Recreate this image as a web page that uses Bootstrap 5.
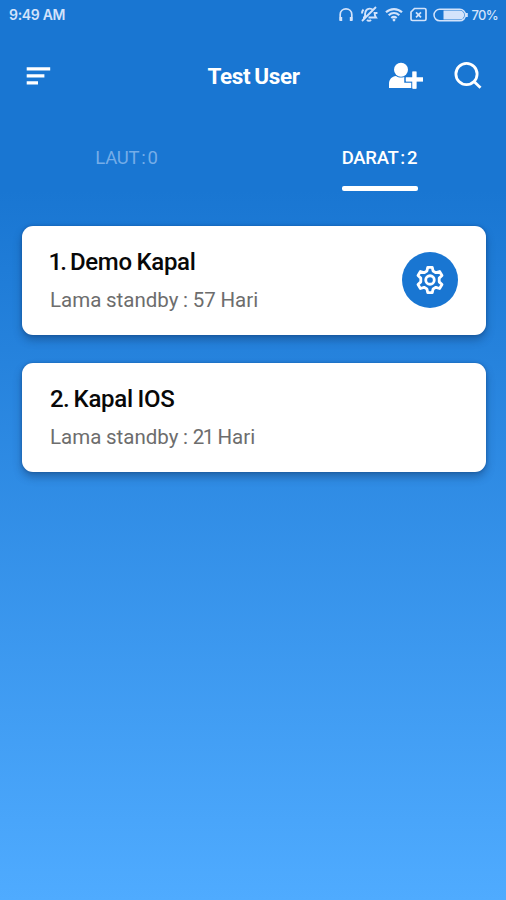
<!DOCTYPE html>
<html lang="id">
<head>
<meta charset="utf-8">
<meta name="viewport" content="width=device-width, initial-scale=1">
<title>Test User</title>
<link href="https://cdn.jsdelivr.net/npm/bootstrap@5.3.0/dist/css/bootstrap.min.css" rel="stylesheet">
<style>
body{font-family:Roboto,"Open Sans",sans-serif;background:linear-gradient(#1976d2 0,#1976d2 190px,#4fabff 900px);min-height:900px;line-height:1}
svg{display:block;flex:none}
.status-bar{height:30px;padding:0 8px 0 9px;color:#d3e3fb;font:500 14px/1 Inter,sans-serif}
.status-bar .clock{font-weight:600;letter-spacing:-.3px}
.status-bar .level{font-size:13px;letter-spacing:-.7px;margin-left:3px}
.app-bar{height:92px;display:grid;grid-template-columns:1fr auto 1fr;padding:0 22px 0 23px}
.app-bar .menu-icon{margin-left:3px}
.app-title{font-size:22.5px;font-weight:700;letter-spacing:-.4px;word-spacing:-1px;padding-top:1px}
.app-actions{gap:26px}
.tab-row{height:69px}
.tab-row .nav-link{padding:27px 0 0;height:69px;font-size:18.500px;color:#75ade8;line-height:18px;letter-spacing:-.25px;word-spacing:-2.200px}
.tab-row .nav-link.active{color:#fff;font-weight:500}
.tab-line{height:4.500px;width:76px;margin-top:19px;background:#fff;border-radius:2px}
.ship-list{padding:34.500px 20px 0 21.500px;gap:28px}
.ship{height:109px;border:0;border-radius:11px;padding:1px 28.500px 0;box-shadow:0 5px 9px rgba(15,50,95,.42),0 0 3px rgba(0,50,120,.45)}
.ship-name{font-size:24px;font-weight:500;color:#080808;letter-spacing:-.3px;word-spacing:-1px}
.num-narrow{letter-spacing:-1.800px;margin-left:-1.500px}
.num{letter-spacing:-.7px}
.days-narrow{letter-spacing:-1.500px}
.ship-time{font-size:20.5px;color:#6d6d6d;margin-top:16px;word-spacing:-.4px}
.gear{width:56px;height:56px;background:#1976d2;margin-top:-1px}
</style>
<script src="https://cdn.jsdelivr.net/npm/bootstrap@5.3.0/dist/js/bootstrap.bundle.min.js"></script>
</head>
<body>
<div class="status-bar d-flex align-items-center justify-content-between">
  <span class="clock">9:49 AM</span>
  <div class="d-flex align-items-center">
    <svg width="131" height="20" viewBox="338 5 131 20" fill="none" stroke="currentColor" stroke-width="1.700">
      <path d="M340.200 20.500v-6c0-7.500 11.600-7.500 11.600 0v6"/><path d="M340.900 17v4M351.100 17v4" stroke-width="2.600"/>
      <path d="M364.500 17.500c1-1.500.3-3.500.8-5 .8-4 5-5 8-2.500M374.500 12c.2 2 0 3.500 1.500 5.500h-7.500M363 17.500h2M376 7 362 21M367 19.800c1 1.200 3 1.200 4 0M362 13.500c0-2 .5-3 1.500-4M376.500 14v-2" stroke-width="1.900"/>
      <path d="M386 12.300c4.500-4.300 11.500-4.300 16 0M388.700 15.200c3.200-2.900 7.400-2.900 10.600 0M391.300 18c1.700-1.400 3.700-1.400 5.400 0" stroke-width="2.200"/><circle cx="394" cy="20" r="1.400" fill="currentColor" stroke="none"/>
      <path d="M414.500 8.500h10q1.500 0 1.500 1.500v9q0 1.500-1.500 1.500h-12q-1.500 0-1.500-1.500v-7zM416 12.300l5 5M421 12.300l-5 5"/>
      <rect x="434" y="9.300" width="31.500" height="11.500" rx="5.700" stroke-width="1.500"/><path d="M443.500 10.500h16.200a4.500 4.500 0 0 1 0 9h-16.200z" fill="currentColor" stroke="none"/>
      <path d="M466.800 13v4" stroke-width="2"/>
    </svg>
    <span class="level">70%</span>
  </div>
</div>
<header class="app-bar align-items-center text-white">
  <svg class="menu-icon" width="25" height="20" viewBox="0 0 25 20" fill="currentColor"><path d="M.7 1.300h23.500v3.200H.7zM.7 8.300h17.700v3.200H.7zM.7 15.300H12v3.200H.7z"/></svg>
  <div class="app-title">Test User</div>
  <div class="app-actions d-flex align-items-center justify-content-end">
    <svg width="36" height="28" viewBox="389 62 36 28" fill="currentColor"><circle cx="402" cy="69.800" r="7"/><path d="M390 88v-4c0-5 3-7.500 7-8 3 2 7 2 10 0 4 .5 7 3 7 8v4z"/><path d="M413 71h5v5.700h6.700v5.300h-6.700v7.500h-5V82h-7v-5.300h7z" stroke="#1976d2" stroke-width="1.500"/><path d="M413.300 71.500h4.200v6h6.500v4h-6.500v7h-4.200v-7h-6.300v-4h6.300z"/></svg>
    <svg width="34" height="34" viewBox="450 59 34 34" fill="none" stroke="currentColor" stroke-width="2.800"><circle cx="466.500" cy="74" r="10.600"/><path d="m474 81.500 6.500 6.300"/></svg>
  </div>
</header>
<nav class="tab-row nav d-flex">
  <a class="nav-link col-6 text-center" href="#"><span>LAUT : 0</span></a>
  <a class="nav-link active col-6 d-flex flex-column align-items-center" href="#"><span>DARAT : 2</span><i class="tab-line"></i></a>
</nav>
<main class="ship-list d-flex flex-column">
  <section class="card ship flex-row align-items-center justify-content-between">
    <div><div class="ship-name"><span class="num-narrow">1.</span> Demo Kapal</div><div class="ship-time">Lama standby : 57 Hari</div></div>
    <button type="button" class="gear btn rounded-circle p-0 border-0 d-flex align-items-center justify-content-center" aria-label="Pengaturan">
      <svg width="32" height="32" viewBox="0 0 24 24" fill="none" stroke="#fff" stroke-width="2.100" stroke-linejoin="round"><circle cx="12" cy="12" r="3.200"/><path d="M10.300 2.500h3.400l.6 2.800 2.100 1.200 2.800-.9 1.800 3-2.100 2v2.800l2.100 2-1.800 3-2.800-.9-2.100 1.200-.6 2.800h-3.400l-.6-2.800-2.100-1.200-2.800.9-1.800-3 2.100-2v-2.800l-2.100-2 1.800-3 2.800.9 2.100-1.200z"/></svg>
    </button>
  </section>
  <section class="card ship flex-row align-items-center justify-content-between">
    <div><div class="ship-name"><span class="num">2.</span> Kapal IOS</div><div class="ship-time">Lama standby : <span class="days-narrow">21</span> Hari</div></div>
  </section>
</main>
</body>
</html>
